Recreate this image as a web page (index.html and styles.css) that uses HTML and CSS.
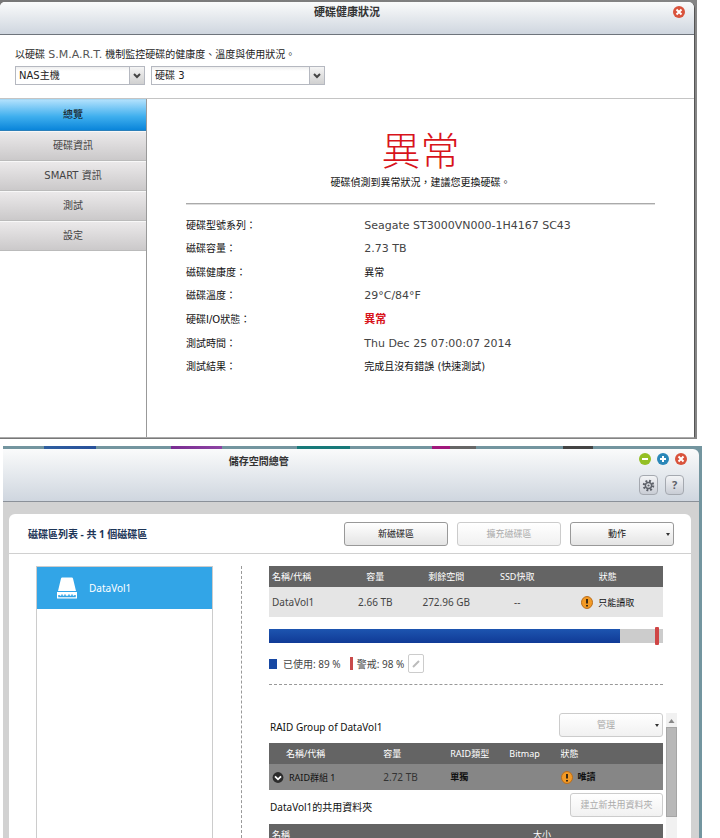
FILE: index.html
```html
<!DOCTYPE html>
<html lang="zh-Hant">
<head>
    <meta charset="UTF-8">
    <meta name="viewport" content="width=device-width, initial-scale=1">
    <title>硬碟健康狀況</title>
    <link rel="stylesheet" href="styles.css">
</head>
<body>
    <!-- Disk health window -->
    <section class="health">
        <div class="health-window">
            <header class="health-title">
                <h1>硬碟健康狀況</h1>
                <button class="dot dot-close health-close" aria-label="關閉">
                    <svg viewBox="0 0 12 12"><path d="M3.5 3.5l5 5M8.5 3.5l-5 5"/></svg>
                </button>
            </header>

            <div class="health-toolbar">
                <p>以硬碟 <span class="latin">S.M.A.R.T.</span> 機制監控硬碟的健康度、溫度與使用狀況。</p>
                <div class="selects">
                    <div class="select select-host">
                        <select aria-label="主機"><option>NAS主機</option></select>
                        <span class="select-arrow"><svg viewBox="0 0 8 6"><path d="M1 1l3 3 3-3"/></svg></span>
                    </div>
                    <div class="select select-disk">
                        <select aria-label="硬碟"><option>硬碟 3</option></select>
                        <span class="select-arrow"><svg viewBox="0 0 8 6"><path d="M1 1l3 3 3-3"/></svg></span>
                    </div>
                </div>
            </div>

            <div class="health-body">
                <nav class="tabs">
                    <button class="tab active">總覽</button>
                    <button class="tab">硬碟資訊</button>
                    <button class="tab">SMART 資訊</button>
                    <button class="tab">測試</button>
                    <button class="tab">設定</button>
                </nav>
                <div class="summary">
                    <h2>異常</h2>
                    <p>硬碟偵測到異常狀況，建議您更換硬碟。</p>
                    <hr>
                    <table class="info">
                        <tr><th>硬碟型號系列：</th><td>Seagate ST3000VN000-1H4167 SC43</td></tr>
                        <tr><th>磁碟容量：</th><td>2.73 TB</td></tr>
                        <tr><th>磁碟健康度：</th><td class="dark">異常</td></tr>
                        <tr><th>磁碟溫度：</th><td>29°C/84°F</td></tr>
                        <tr><th>硬碟I/O狀態：</th><td class="alert">異常</td></tr>
                        <tr><th>測試時間：</th><td>Thu Dec 25 07:00:07 2014</td></tr>
                        <tr><th>測試結果：</th><td class="dark">完成且沒有錯誤 (快速測試)</td></tr>
                    </table>
                </div>
            </div>
        </div>
    </section>

    <!-- Storage manager window -->
    <section class="storage">
        <header class="storage-title">
            <h1>儲存空間總管</h1>
            <div class="storage-tools">
                <div class="dots">
                    <button class="dot dot-min" aria-label="最小化"><svg viewBox="0 0 12 12"><path d="M3 6h6"/></svg></button>
                    <button class="dot dot-max" aria-label="最大化"><svg viewBox="0 0 12 12"><path d="M3 6h6M6 3v6"/></svg></button>
                    <button class="dot dot-close" aria-label="關閉"><svg viewBox="0 0 12 12"><path d="M3.5 3.5l5 5M8.5 3.5l-5 5"/></svg></button>
                </div>
                <div class="tools">
                    <button class="tool" aria-label="設定">
                        <svg viewBox="0 0 14 14">
                            <circle cx="7" cy="7" r="5" fill="none" stroke="#5d6169" stroke-width="2.4" stroke-dasharray="2 1.93"/>
                            <circle cx="7" cy="7" r="3.3" fill="none" stroke="#5d6169" stroke-width="1.5"/>
                            <circle cx="7" cy="7" r="1.2" fill="#5d6169"/>
                        </svg>
                    </button>
                    <button class="tool" aria-label="說明">?</button>
                </div>
            </div>
        </header>

        <div class="storage-frame">
            <div class="panel">
                <div class="panel-head">
                    <h2>磁碟區列表 - 共 1 個磁碟區</h2>
                    <div class="actions">
                        <button class="btn">新磁碟區</button>
                        <button class="btn" disabled>擴充磁碟區</button>
                        <button class="btn btn-menu">動作</button>
                    </div>
                </div>

                <div class="panel-body">
                    <div class="volumes">
                        <button class="volume">
                            <svg viewBox="0 0 20 22">
                                <path fill="#fff" d="M4 1.5Q4.200 .5 5.200 .5H14.800Q15.800 .5 16 1.500L19 14H1z"/>
                                <path fill="#fff" d="M0 15h20v6.500H0z"/>
                                <path fill="none" stroke="#32a5e7" stroke-width="1.500" d="M2 18v1.500h16V18M5 17.500v2M8 17.500v2M12 17.500v2M15 17.500v2"/>
                            </svg>
                            DataVol1
                        </button>
                    </div>

                    <div class="detail">
                        <table class="grid grid-volume">
                            <colgroup><col class="v1"><col class="v2"><col class="v3"><col class="v4"><col></colgroup>
                            <thead>
                                <tr><th>名稱/代稱</th><th>容量</th><th>剩餘空間</th><th>SSD快取</th><th>狀態</th></tr>
                            </thead>
                            <tbody>
                                <tr>
                                    <td>DataVol1</td><td>2.66 TB</td><td>272.96 GB</td><td>--</td>
                                    <td>
                                        <span class="status">
                                            <svg viewBox="0 0 12 13"><ellipse cx="6" cy="6.500" rx="5.500" ry="6" fill="#f39a25" stroke="#b96d1c"/><path d="M6 3v4.500M6 9v1.500" stroke="#3c2a14" stroke-width="2"/></svg>
                                            只能讀取
                                        </span>
                                    </td>
                                </tr>
                            </tbody>
                        </table>

                        <div class="usage">
                            <div class="usage-used" style="width: 89%"></div>
                            <div class="usage-mark" style="left: 98%"></div>
                        </div>

                        <div class="legend">
                            <span class="swatch"></span>
                            <span class="legend-used">已使用: 89 %</span>
                            <span class="tick"></span>
                            <span>警戒: 98 %</span>
                            <button class="edit" aria-label="編輯"><svg viewBox="0 0 10 10"><path d="M2 8l6-6"/></svg></button>
                        </div>

                        <div class="scroller">
                            <div class="scroller-content">
                                <div class="group-head">
                                    <h3>RAID Group of DataVol1</h3>
                                    <button class="btn btn-menu" disabled>管理</button>
                                </div>
                                <table class="grid grid-raid">
                                    <colgroup><col class="r1"><col class="r2"><col class="r3"><col class="r4"><col></colgroup>
                                    <thead>
                                        <tr><th>名稱/代稱</th><th>容量</th><th>RAID類型</th><th>Bitmap</th><th>狀態</th></tr>
                                    </thead>
                                    <tbody>
                                        <tr>
                                            <td>
                                                <span class="status">
                                                    <svg viewBox="0 0 10 10"><circle cx="5" cy="5" r="4.500" fill="#2c2c2c"/><path d="M2.500 4L5 6.500 7.500 4" fill="none" stroke="#fff" stroke-width="1.500"/></svg>
                                                    RAID群組 1
                                                </span>
                                            </td>
                                            <td>2.72 TB</td><td class="strong">單獨</td><td></td>
                                            <td class="strong">
                                                <span class="status">
                                                    <svg viewBox="0 0 12 13"><ellipse cx="6" cy="6.500" rx="5.500" ry="6" fill="#f39a25" stroke="#b96d1c"/><path d="M6 3v4.500M6 9v1.500" stroke="#3c2a14" stroke-width="2"/></svg>
                                                    唯讀
                                                </span>
                                            </td>
                                        </tr>
                                    </tbody>
                                </table>
                                <div class="group-head group-head-share">
                                    <h3>DataVol1的共用資料夾</h3>
                                    <button class="btn btn-share" disabled>建立新共用資料夾</button>
                                </div>
                                <table class="grid grid-share">
                                    <thead>
                                        <tr><th>名稱</th><th>大小</th></tr>
                                    </thead>
                                </table>
                            </div>
                            <div class="scrollbar">
                                <svg class="scroll-up" viewBox="0 0 11 14"><path d="M5.500 6L8.500 10h-6z"/></svg>
                                <span class="scroll-thumb"></span>
                            </div>
                        </div>
                    </div>
                </div>
            </div>
        </div>
    </section>
</body>
</html>
```
FILE: styles.css
```css
* {
    margin: 0;
    padding: 0;
    box-sizing: border-box;
}

body {
    height: 100vh;
    display: flex;
    flex-direction: column;
    overflow: hidden;
    background: #fff;
    font-family: "DejaVu Sans", "Noto Sans CJK TC", sans-serif;
    font-size: 10px;
    line-height: 16px;
    color: #444;
}

button,
select {
    font: inherit;
    color: inherit;
    border: none;
    background: none;
}

/* Disk health window */
.health {
    margin-right: 23px;
    padding: 2px 2px 1px 0;
    background: linear-gradient(90deg, #777, #858585);
    flex: none;
}

.health-window {
    background: #fff;
    border-right: 1px solid #555;
    border-bottom: 1px solid #aaa;
    border-radius: 5px 6px 0 0;
    overflow: hidden;
}

.health-title {
    height: 33px;
    position: relative;
    text-align: center;
    background: linear-gradient(#fafbfb, #cfd6df);
    border-bottom: 1px solid #6e747c;
}

.health-title h1 {
    font-size: 11px;
    line-height: 22px;
    color: #333;
}

.health-close {
    position: absolute;
    top: 4px;
    right: 9px;
}

.dot {
    width: 12px;
    height: 12px;
    border-radius: 50%;
}

.dot svg {
    display: block;
    width: 12px;
    height: 12px;
    fill: none;
    stroke: #fff;
    stroke-width: 2;
}

.dot-close {
    background: #d9533c;
}

.dot-min {
    background: #94bf24;
}

.dot-max {
    background: #2a87b8;
}

.health-toolbar {
    height: 64px;
    padding: 12px 15px 0;
    border-bottom: 1px solid #c4c4c4;
    color: #222;
}

.latin {
    font-size: 11px;
    color: #555;
}

.selects {
    display: flex;
    gap: 6px;
    margin-top: 3px;
}

.select {
    position: relative;
    height: 19px;
}

.select-host {
    width: 130px;
}

.select-disk {
    width: 174px;
}

.select select {
    appearance: none;
    width: 100%;
    height: 100%;
    padding: 0 18px 0 3px;
    border: 1px solid #b5b8c0;
    background: linear-gradient(#eee, #fff 4px);
}

.select-arrow {
    position: absolute;
    top: 1px;
    right: 1px;
    bottom: 1px;
    width: 15px;
    display: flex;
    align-items: center;
    justify-content: center;
    border-left: 1px solid #b5b8c0;
    background: linear-gradient(#f4f4f4, #d0d0d0);
    pointer-events: none;
}

.select-arrow svg {
    width: 8px;
    height: 6px;
    fill: none;
    stroke: #444;
    stroke-width: 2;
}

.health-body {
    display: flex;
    min-height: 338px;
}

.tabs {
    width: 147px;
    display: flex;
    flex-direction: column;
    border-right: 1px solid #999;
}

.tab {
    height: 30px;
    background: linear-gradient(#ebe9ea, #cbc9ca);
    border-top: 1px solid #f8f8f8;
    border-bottom: 1px solid #bbb;
}

.tab.active {
    height: 32px;
    color: #111;
    background: linear-gradient(#b0e0fc, #3fafee 55%, #0a85da);
    border-color: #a5d8f5;
    border-bottom-color: #2a7fba;
}

.summary {
    flex: 1;
    padding: 30px 39px 0;
    text-align: center;
    color: #111;
}

.summary h2 {
    font-size: 39px;
    font-weight: 300;
    line-height: 46px;
    color: #d8141b;
}

.summary hr {
    height: 2px;
    margin: 12px 0 9px;
    border: none;
    border-top: 1px solid #aaa;
    border-bottom: 1px solid #ddd;
}

.info {
    width: 100%;
    height: 165px;
    border-collapse: collapse;
    text-align: left;
}

.info th {
    width: 38%;
    font-weight: 400;
}

.info td {
    font-size: 11px;
    color: #444;
}

.info .dark {
    font-size: 10px;
    color: #111;
}

.info .alert {
    color: #d8141b;
    font-weight: 700;
}

/* Storage manager window */
.storage {
    flex: 1;
    min-height: 0;
    margin: 7px 18px 0 3px;
    padding: 3px 3px 0 0;
    display: flex;
    flex-direction: column;
    font-family: "Noto Sans", "Noto Sans CJK TC", sans-serif;
    background: linear-gradient(90deg, transparent 41px, #2f5fa0 41px, #28509a 93px, transparent 93px, transparent 168px, #7a2d92 168px, #8e44a4 219px, transparent 219px, transparent 294px, #187a7a 294px, #187a7a 347px, transparent 347px, transparent 429px, #a1187c 429px, #a1187c 447px, #666 447px, #666 473px, transparent 473px, transparent 560px, #444 560px, #444 590px, transparent 590px), #73959f;
}

.storage-title {
    flex: none;
    height: 53px;
    display: flex;
    justify-content: space-between;
    padding: 4px 12px 0 0;
    background: linear-gradient(#fafbfb, #cfd6df);
    border-bottom: 1px solid #8b9199;
    border-radius: 0 6px 0 0;
}

.storage-title h1 {
    margin-left: 33%;
    font-size: 10px;
    color: #333;
}

.dots {
    display: flex;
    justify-content: flex-end;
    gap: 6px;
}

.tools {
    display: flex;
    gap: 7px;
    margin-top: 10px;
}

.tool {
    width: 19px;
    height: 20px;
    border: 1px solid #a5a9b0;
    border-radius: 4px;
    background: linear-gradient(#f3f4f6, #c9cdd5);
    font-size: 11px;
    font-weight: 700;
    line-height: 16px;
    color: #5d6169;
}

.tool svg {
    display: block;
    width: 13px;
    height: 13px;
    margin: auto;
}

.storage-frame {
    flex: 1;
    min-height: 0;
    padding: 12px 8px 0 6px;
    background: #d2d2d2;
}

.panel {
    height: 100%;
    display: flex;
    flex-direction: column;
    background: #fff;
    border-radius: 6px 6px 0 0;
}

.panel-head {
    flex: none;
    height: 40px;
    display: flex;
    justify-content: space-between;
    align-items: center;
    padding: 0 17px 0 19px;
    border-bottom: 1px solid #d0d0d0;
}

.panel-head h2 {
    font-size: 10px;
    color: #1d3557;
}

.actions {
    display: flex;
    gap: 9px;
}

.btn {
    position: relative;
    width: 104px;
    height: 24px;
    border: 1px solid #999;
    border-radius: 3px;
    background: linear-gradient(#fff, #e4e4e4);
    font-size: 9px;
    color: #111;
}

.btn:disabled {
    border-color: #ccc;
    background: linear-gradient(#fff, #f1f1f1);
    color: #aaa;
}

.btn-menu {
    padding-right: 10px;
}

.btn-menu::after {
    content: "";
    position: absolute;
    top: 10px;
    right: 3px;
    border: 2px solid transparent;
    border-top: 3px solid #333;
}

.btn-share {
    width: 93px;
}

.panel-body {
    flex: 1;
    min-height: 0;
    display: flex;
    padding: 12px 14px 0 27px;
}

.volumes {
    width: 177px;
    border: 1px solid #ccc;
    border-bottom: none;
}

.volume {
    width: 100%;
    height: 42px;
    display: flex;
    align-items: center;
    gap: 12px;
    padding-left: 20px;
    background: #32a5e7;
    color: #fff;
}

.volume svg {
    width: 20px;
    height: 22px;
}

.detail {
    flex: 1;
    min-width: 0;
    display: flex;
    flex-direction: column;
    margin-left: 28px;
    padding-left: 27px;
    border-left: 1px dashed #999;
}

.grid {
    width: 100%;
    border-collapse: collapse;
    table-layout: fixed;
    text-align: left;
}

.grid th {
    height: 21px;
    background: #646464;
    color: #fff;
    font-size: 9px;
    font-weight: 400;
}

.grid-volume {
    width: auto;
    margin-right: 14px;
}

.v1,
.v2,
.v3,
.v4 {
    width: 18%;
}

.grid-volume th,
.grid-volume td {
    text-align: center;
}

.grid-volume th:first-child,
.grid-volume td:first-child {
    padding-left: 3px;
    text-align: left;
}

.grid-volume td {
    height: 30px;
    background: #e5e5e5;
}

.status {
    display: inline-flex;
    align-items: center;
    gap: 5px;
    font-size: 9px;
    color: #111;
    vertical-align: middle;
}

.status svg {
    width: 12px;
    height: 13px;
}

.usage {
    position: relative;
    height: 14px;
    margin: 12px 14px 0 0;
    background: #ccc;
}

.usage-used {
    height: 100%;
    background: linear-gradient(#1d55b0, #103a96);
}

.usage-mark {
    position: absolute;
    top: -2px;
    width: 4px;
    height: 18px;
    border-radius: 1px;
    background: #cf4545;
}

.legend {
    display: flex;
    align-items: center;
    height: 42px;
    margin-right: 14px;
    border-bottom: 1px dashed #999;
}

.swatch {
    width: 8px;
    height: 10px;
    margin-right: 6px;
    background: #1748a3;
}

.legend-used {
    margin-right: 9px;
}

.tick {
    width: 3px;
    height: 13px;
    margin-right: 4px;
    background: #c94a4a;
}

.edit {
    width: 16px;
    height: 19px;
    margin-left: 4px;
    border: 1px solid #ccc;
    border-radius: 2px;
}

.edit svg {
    display: block;
    width: 10px;
    height: 10px;
    margin: auto;
    stroke: #bbb;
    stroke-width: 2;
}

.scroller {
    flex: 1;
    min-height: 0;
    display: flex;
    gap: 3px;
    margin-top: 28px;
    overflow: hidden;
}

.scroller-content {
    flex: 1;
}

.group-head {
    display: flex;
    justify-content: space-between;
    height: 30px;
}

.group-head h3 {
    padding: 6px 0 0 1px;
    font-size: 10px;
    font-weight: 400;
    color: #111;
}

.group-head-share {
    height: 34px;
    padding-top: 3px;
}

.r1 {
    width: 29%;
}

.r2 {
    width: 17%;
}

.r3 {
    width: 15%;
}

.r4 {
    width: 13%;
}

.grid-raid td {
    height: 26px;
    background: #868686;
    color: #333;
}

.grid-raid th:first-child {
    padding-left: 17px;
}

.grid-raid td:first-child {
    padding-left: 3px;
}

.grid-raid .strong {
    font-size: 9px;
    font-weight: 700;
    color: #111;
}

.grid-share th:first-child {
    width: 67%;
    padding-left: 3px;
}

.scrollbar {
    width: 11px;
    background: #f1f1f1;
}

.scroll-up {
    display: block;
    width: 11px;
    height: 14px;
    fill: #888;
}

.scroll-thumb {
    display: block;
    height: 90px;
    background: #b8b8b8;
    border: 1px solid #a5a5a5;
}
```
